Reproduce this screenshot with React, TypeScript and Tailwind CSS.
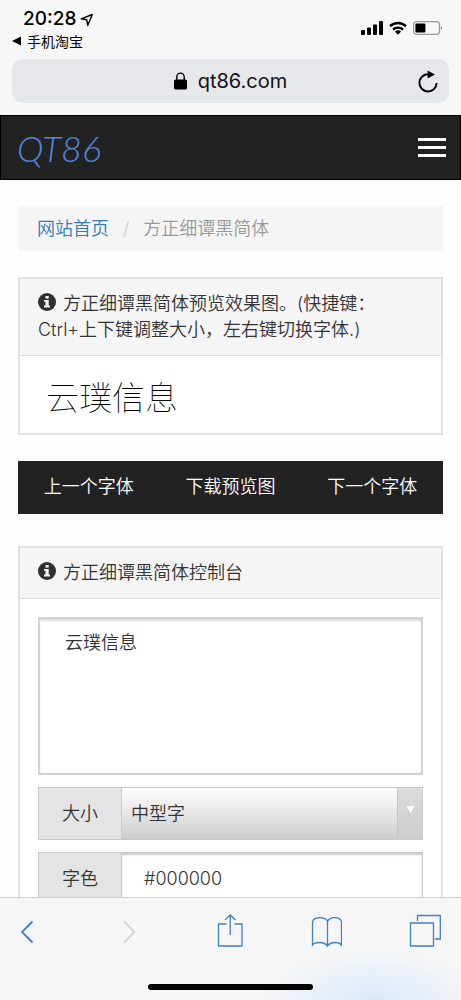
import React, { useState } from "react";

const SIZES = ["小型字", "中型字", "大型字"];

function InfoIcon() {
  return (
    <svg
      viewBox="0 0 18 18"
      className="mr-[7px] inline-block h-[18px] w-[18px] align-[-1px]"
      aria-hidden="true"
    >
      <circle cx="9" cy="9" r="9" fill="#2f2f2f" />
      <path d="M7.5 3h3.2v2.6H7.5z" fill="#f5f5f5" />
      <path d="M6 7h4.7v5.4H12v2H6v-2h1.5V8.8H6z" fill="#f5f5f5" />
    </svg>
  );
}

function StatusBar() {
  return (
    <div className="flex h-[51px] items-start justify-between pt-2 pr-[18px] pl-3">
      <div>
        <div className="flex h-[23px] items-center gap-1 pl-[11px] text-[19px] font-medium">
          20:28
          <svg viewBox="0 0 14 14" className="h-[14px] w-[14px]" aria-hidden="true">
            <path
              d="M1.2 5.8 12.3 1.5 7.7 12.4 6.8 6.800z"
              fill="none"
              stroke="#000"
              strokeWidth="1.4"
              strokeLinejoin="round"
            />
          </svg>
        </div>
        <a href="#back" className="flex h-5 items-center gap-[5px] text-[14px]">
          <svg viewBox="0 0 10 10" className="h-[10px] w-[10px]" aria-hidden="true">
            <path d="M0 5 9 .5v9z" />
          </svg>
          手机淘宝
        </a>
      </div>
      <div className="flex h-10 items-center gap-[6px]">
        <svg viewBox="0 0 22 14" className="h-[14px] w-[22px]" aria-hidden="true">
          <rect x="0" y="9" width="4" height="5" rx="1" />
          <rect x="6" y="6.5" width="4" height="7.5" rx="1" />
          <rect x="12" y="3.5" width="4" height="10.5" rx="1" />
          <rect x="18" y="0" width="4" height="14" rx="1" />
        </svg>
        <svg viewBox="0 0 18 14" className="h-[14px] w-[18px]" aria-hidden="true">
          <path
            d="M1 5.2a11.6 11.6 0 0 1 16 0M4 8.6a7.3 7.3 0 0 1 10 0"
            fill="none"
            stroke="#000"
            strokeWidth="2.4"
          />
          <path d="M5.9 10.6a4.6 4.6 0 0 1 6.2 0L9 13.8z" />
        </svg>
        <svg viewBox="0 0 30 14" className="h-[14px] w-[30px]" aria-hidden="true">
          <rect
            x=".6"
            y=".6"
            width="25.8"
            height="12.8"
            rx="3"
            fill="none"
            stroke="#999"
            strokeWidth="1.2"
          />
          <rect x="2.4" y="2.4" width="10" height="9.2" rx="1" />
          <path d="M27.8 4.8c1.6.6 1.6 3.8 0 4.4z" fill="#888" />
        </svg>
      </div>
    </div>
  );
}

function AddressBar() {
  return (
    <div className="mx-3 mt-2 mb-3 flex h-[44px] items-center rounded-[11px] bg-[#e5e7eb] pr-[11px] pl-[31px]">
      <div className="flex flex-1 items-center justify-center gap-[11px] text-[20px] text-[#111]">
        <svg viewBox="0 0 13 18" className="h-[18px] w-[13px]" aria-hidden="true">
          <rect x="0" y="7.5" width="13" height="10" rx="1.5" />
          <path
            d="M2.8 8V4.8a3.7 3.7 0 0 1 7.4 0V8"
            fill="none"
            stroke="#000"
            strokeWidth="1.4"
          />
        </svg>
        qt86.com
      </div>
      <button type="button" aria-label="刷新">
        <svg viewBox="0 0 20 23" className="h-[23px] w-5">
          <path
            d="M10.5 4.3A8.600 8.600 0 1 0 18.600 13"
            fill="none"
            stroke="#000"
            strokeWidth="1.9"
          />
          <path d="M9.6.4 17 4.5 9.6 8.600z" />
        </svg>
      </button>
    </div>
  );
}

function Panel({
  title,
  children,
}: {
  title: string;
  children: React.ReactNode;
}) {
  return (
    <section className="border-2 border-[#e1e1e1] bg-white">
      <h2 className="border-b border-[#dcdcdc] bg-[#f5f5f5] px-[18px] py-3 text-[18px] leading-[26px] font-[350]">
        <InfoIcon />
        {title}
      </h2>
      {children}
    </section>
  );
}

function Toolbar() {
  return (
    <nav className="relative h-[103px] shrink-0 overflow-hidden border-t border-[#cfcfcf] bg-[#f6f6f6] bg-[radial-gradient(ellipse_110px_50px_at_81%_100%,#dbe8fb,transparent)]">
      <div className="flex justify-between pt-4 pr-5 pl-3 text-[#3f7fc4]">
        <button type="button" aria-label="后退">
          <svg viewBox="0 0 32 34" className="h-[34px] w-8" fill="none" stroke="currentColor" strokeWidth="1.8">
            <path d="M20.5 7.5 10 18l10.5 10.5" />
          </svg>
        </button>
        <button type="button" aria-label="前进" disabled className="text-[#d4d4d4]">
          <svg viewBox="0 0 32 34" className="h-[34px] w-8" fill="none" stroke="currentColor" strokeWidth="1.8">
            <path d="M13 7.5 23.5 18 13 28.5" />
          </svg>
        </button>
        <button type="button" aria-label="分享">
          <svg viewBox="0 0 32 34" className="h-[34px] w-8" fill="none" stroke="currentColor" strokeWidth="1.3">
            <path d="M15.5 10H7.5v22h23.500v-22H23.500M19.200 21V1M14 6 19.200.9 24.500 6" />
          </svg>
        </button>
        <button type="button" aria-label="书签">
          <svg viewBox="0 0 32 34" className="h-[34px] w-8" fill="none" stroke="currentColor" strokeWidth="1.3">
            <path d="M17.500 7.500C15.500 2.500 4.500 2 2.500 7.500V31C5 27.500 14.500 27.500 17.500 32C20.500 27.500 29 27.500 31.500 31V7.500C29.500 2 19.500 2.500 17.500 7.500V32" />
          </svg>
        </button>
        <button type="button" aria-label="标签页">
          <svg viewBox="0 0 32 34" className="h-[34px] w-8" fill="none" stroke="currentColor" strokeWidth="1.3">
            <path d="M1.500 9H24.500V32H1.500zM8.500 7V1.500H31.300V25H26" />
          </svg>
        </button>
      </div>
      <div className="absolute inset-x-0 bottom-[10px] mx-auto h-[6px] w-[165px] rounded-full bg-black" />
    </nav>
  );
}

export default function App() {
  const [text, setText] = useState("云璞信息");
  const [size, setSize] = useState("中型字");
  const [color, setColor] = useState("#000000");

  return (
    <div className="flex h-screen flex-col overflow-hidden bg-[#fdfdfd] font-[Inter,'Noto_Sans_CJK_SC',sans-serif] text-[#333]">
      <header className="shrink-0 bg-[#f7f7f7] text-black">
        <StatusBar />
        <AddressBar />
      </header>

      <main className="min-h-0 flex-1 overflow-hidden">
        <div className="flex h-[65px] items-center justify-between border border-black bg-[#222] pr-[14px] pl-4">
          <a
            href="#home"
            className="font-[Lato,sans-serif] text-[36px] font-light text-[#5087db] italic"
          >
            QT86
          </a>
          <button type="button" aria-label="菜单" className="flex w-7 flex-col gap-[5px]">
            <span className="h-[3px] bg-white" />
            <span className="h-[3px] bg-white" />
            <span className="h-[3px] bg-white" />
          </button>
        </div>

        <div className="px-[18px] pt-[26px] text-[18px] font-[350]">
          <nav className="mb-[26px] flex h-[45px] items-center bg-[#f5f5f5] px-[19px]">
            <a href="#home" className="text-[#337ab7]">
              网站首页
            </a>
            <span className="px-[14px] text-[#ccc]">/</span>
            <span className="text-[#999]">方正细谭黑简体</span>
          </nav>

          <Panel title="方正细谭黑简体预览效果图。(快捷键：Ctrl+上下键调整大小，左右键切换字体.)">
            <div className="flex h-[77px] items-center px-[26px] pt-2 text-[33px] font-thin text-black">
              {text}
            </div>
          </Panel>

          <div className="my-[26px] grid h-[53px] grid-cols-3 bg-[#222] pb-[2px] text-white">
            <button type="button">上一个字体</button>
            <button type="button">下载预览图</button>
            <button type="button">下一个字体</button>
          </div>

          <div className="pt-[6px]">
            <Panel title="方正细谭黑简体控制台">
              <form className="flex flex-col gap-3 p-[18px]">
                <textarea
                  aria-label="预览文字"
                  value={text}
                  onChange={(e) => setText(e.target.value)}
                  className="block h-[158px] w-full resize-none border-2 border-[#d2d2d2] bg-white px-[25px] py-[10px] leading-[28px] shadow-[inset_0_2px_2px_#ddd] outline-none"
                />
                <div className="flex h-[53px] border border-[#c8c8c8]">
                  <label
                    htmlFor="size"
                    className="flex w-[82px] items-center justify-center bg-[#e4e4e4]"
                  >
                    大小
                  </label>
                  <div className="relative flex-1">
                    <select
                      id="size"
                      value={size}
                      onChange={(e) => setSize(e.target.value)}
                      className="h-full w-full appearance-none border-l border-[#ccc] bg-linear-to-b from-white to-[#cdcdcd] pr-8 pl-[9px] outline-none"
                    >
                      {SIZES.map((s) => (
                        <option key={s}>{s}</option>
                      ))}
                    </select>
                    <span className="pointer-events-none absolute inset-y-0 right-0 flex w-[25px] items-center justify-center border-l border-[#c4c4c4] bg-linear-to-b from-[#dcdcdc] to-[#cdcdcd]">
                      <svg viewBox="0 0 9 8" className="mb-2 h-2 w-[9px]">
                        <path d="M.5 0h8L4.500 7.500z" fill="#fff" />
                      </svg>
                    </span>
                  </div>
                </div>
                <div className="flex h-[53px] border border-[#c8c8c8]">
                  <label
                    htmlFor="color"
                    className="flex w-[82px] items-center justify-center bg-[#e4e4e4]"
                  >
                    字色
                  </label>
                  <input
                    id="color"
                    type="text"
                    value={color}
                    onChange={(e) => setColor(e.target.value)}
                    className="min-w-0 flex-1 border-l border-[#ccc] bg-white px-[22px] shadow-[inset_0_2px_2px_#ccc] outline-none"
                  />
                </div>
              </form>
            </Panel>
          </div>
        </div>
      </main>

      <Toolbar />
    </div>
  );
}
